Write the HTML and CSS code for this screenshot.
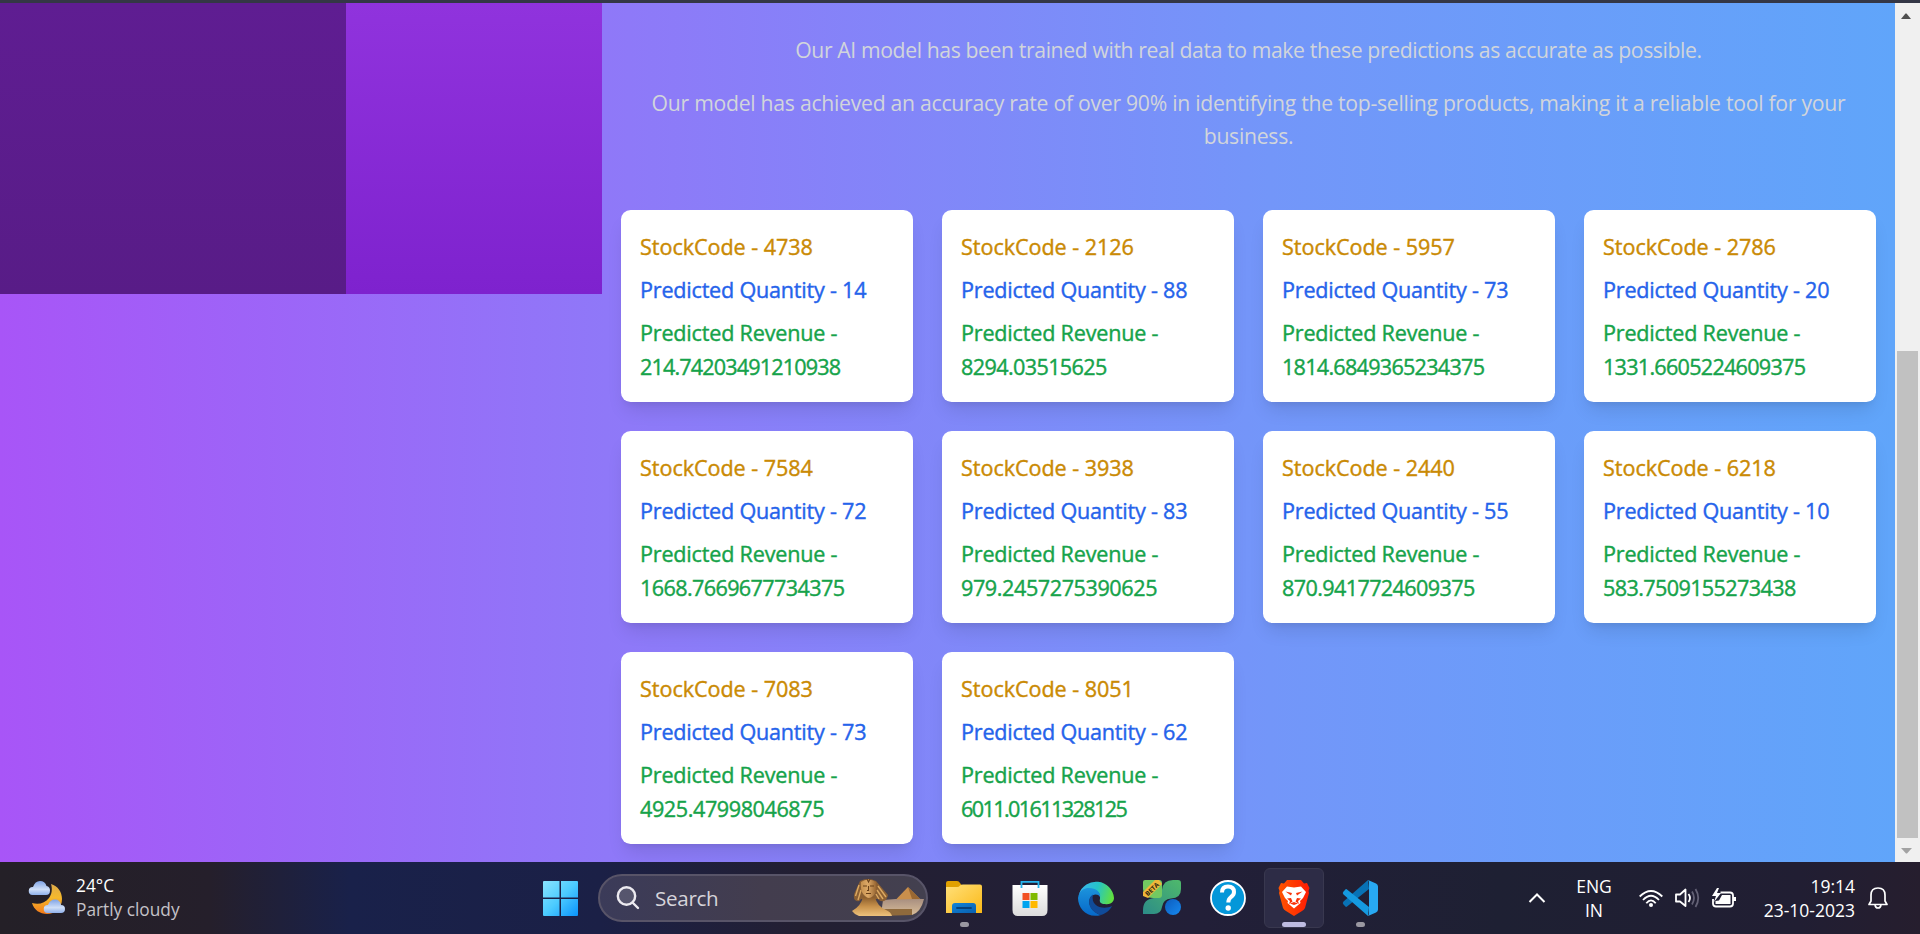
FILE: index.html
```html
<!DOCTYPE html>
<html lang="en">
<head>
<meta charset="utf-8">
<title>Product Predictions</title>
<link rel="stylesheet" href="styles.css">
</head>
<body>
<div class="frame"></div>
<div class="viewport">
  <div class="page">
    <aside class="sidebar"><div class="side-main"></div><div class="side-sub"></div></aside>
    <main class="content">
      <p class="lead">Our AI model has been trained with real data to make these predictions as accurate as possible.</p>
      <p class="lead lead-long">Our model has achieved an accuracy rate of over 90% in identifying the top-selling products, making it a reliable tool for your<br>business.</p>
      <section class="grid">
        <article class="card"><p class="code">StockCode - 4738</p><p class="qty">Predicted Quantity - 14</p><p class="rev">Predicted Revenue -<br><span class="num tight">214.74203491210938</span></p></article>
        <article class="card"><p class="code">StockCode - 2126</p><p class="qty">Predicted Quantity - 88</p><p class="rev">Predicted Revenue -<br><span class="num">8294.03515625</span></p></article>
        <article class="card"><p class="code">StockCode - 5957</p><p class="qty">Predicted Quantity - 73</p><p class="rev">Predicted Revenue -<br><span class="num snug">1814.6849365234375</span></p></article>
        <article class="card"><p class="code">StockCode - 2786</p><p class="qty">Predicted Quantity - 20</p><p class="rev">Predicted Revenue -<br><span class="num snug">1331.6605224609375</span></p></article>
        <article class="card"><p class="code">StockCode - 7584</p><p class="qty">Predicted Quantity - 72</p><p class="rev">Predicted Revenue -<br><span class="num">1668.7669677734375</span></p></article>
        <article class="card"><p class="code">StockCode - 3938</p><p class="qty">Predicted Quantity - 83</p><p class="rev">Predicted Revenue -<br><span class="num loose">979.2457275390625</span></p></article>
        <article class="card"><p class="code">StockCode - 2440</p><p class="qty">Predicted Quantity - 55</p><p class="rev">Predicted Revenue -<br><span class="num">870.9417724609375</span></p></article>
        <article class="card"><p class="code">StockCode - 6218</p><p class="qty">Predicted Quantity - 10</p><p class="rev">Predicted Revenue -<br><span class="num">583.7509155273438</span></p></article>
        <article class="card"><p class="code">StockCode - 7083</p><p class="qty">Predicted Quantity - 73</p><p class="rev">Predicted Revenue -<br><span class="num loose">4925.47998046875</span></p></article>
        <article class="card"><p class="code">StockCode - 8051</p><p class="qty">Predicted Quantity - 62</p><p class="rev">Predicted Revenue -<br><span class="num tightest">6011.01611328125</span></p></article>
      </section>
    </main>
  </div>
  <div class="scrollbar">
    <svg width="25" height="25"><path d="M6 16l4.500-5.500h1L16 16z" fill="#505050"/></svg>
    <div class="track"><div class="thumb"></div></div>
    <svg width="25" height="23"><path d="M6 9h11l-5 5.500h-1z" fill="#a3a3a3"/></svg>
  </div>
</div>
<footer class="taskbar">
  <div class="weather">
    <svg width="38" height="36" viewBox="0 0 38 36">
      <defs>
        <linearGradient id="moon" x1="0" y1="0" x2="0" y2="1"><stop offset="0" stop-color="#dda94a"/><stop offset=".45" stop-color="#f5b92c"/><stop offset="1" stop-color="#f2791b"/></linearGradient>
        <linearGradient id="cloud" x1="0" y1="0" x2="0" y2="1"><stop offset="0" stop-color="#7fa3e6"/><stop offset=".6" stop-color="#cfdff8"/><stop offset="1" stop-color="#8fb0ea"/></linearGradient>
      </defs>
      <path d="M23 4C30 6 34 12 34 19C34 28 27 34 19 34C12 34 6 30 4 23C11 25 17 23 21 18C24 14 24.500 9 23 4Z" fill="url(#moon)"/>
      <path d="M4.500 15A4 4 0 0 1 5 7Q7 1 12 1Q17 1 18.500 6Q22 6.500 22 10.500Q22 15 18 15Z" fill="url(#cloud)"/>
      <path d="M19.500 33A4 4 0 0 1 20 25Q22 19.500 27 19.500Q32 19.500 33 25Q37 25 37 29Q37 33 33 33Z" fill="url(#cloud)"/>
    </svg>
    <div class="weather-text"><span>24°C</span><span class="dim">Partly cloudy</span></div>
  </div>
  <div class="apps">
    <svg class="start" width="35" height="35" viewBox="0 0 35 35">
      <defs><linearGradient id="win" gradientUnits="userSpaceOnUse" x1="0" y1="0" x2="35" y2="35"><stop offset="0" stop-color="#8ae4ff"/><stop offset=".5" stop-color="#4ccbff"/><stop offset="1" stop-color="#0a93fb"/></linearGradient></defs>
      <path fill="url(#win)" d="M1 0H16.500V16.500H0V1Q0 0 1 0ZM18 0H34Q35 0 35 1V16.500H18ZM0 18H16.500V35H1Q0 35 0 34ZM18 18H35V34Q35 35 34 35H18Z"/>
    </svg>
    <div class="search">
      <svg width="24" height="24" viewBox="0 0 24 24" fill="#ffffff22" stroke="#eceaf0" stroke-width="2.400" stroke-linecap="round"><circle cx="10.500" cy="10" r="8.700"/><path d="M17 17l5 5"/></svg>
      <span class="search-label">Search</span>
      <svg width="74" height="40" viewBox="0 0 74 40">
        <defs>
          <linearGradient id="face" x1="0" y1="0" x2="1" y2="0"><stop offset="0" stop-color="#c48f4e"/><stop offset=".45" stop-color="#dda967"/><stop offset="1" stop-color="#94622f"/></linearGradient>
          <linearGradient id="body" x1="0" y1="0" x2="0" y2="1"><stop offset="0" stop-color="#8a5c2b"/><stop offset=".5" stop-color="#c8924c"/><stop offset="1" stop-color="#edc27c"/></linearGradient>
          <linearGradient id="dune" x1="0" y1="0" x2="0" y2="1"><stop offset="0" stop-color="#a78e80"/><stop offset="1" stop-color="#d9bd98"/></linearGradient>
        </defs>
        <path d="M32 22Q50 20 73 21Q70 34 61 37H30Z" fill="url(#dune)"/>
        <path d="M45 21.500L57 9L69 21Z" fill="#c98f4c"/><path d="M57 9L69 21H61Z" fill="#9a6832"/>
        <path d="M30 31H61V37L30 38Z" fill="#8f6a3c"/>
        <path d="M9 3Q17-1 25 3L37 17Q36 22 33 23Q29 24 27 21H10Q8 25 4 22Q2 20 3.500 15Z" fill="#8a5f33"/>
        <path d="M8 7L4.500 18M10 12L7 22M27 8L35 19M26 12L32 21M25 16L28 21" stroke="#dca961" stroke-width="1.400" fill="none"/>
        <path d="M1 33Q10 28 12 19H24Q26 28 35 32Q40 34 41 38H8Q3 36 1 33Z" fill="url(#body)"/>
        <path d="M10 4Q17-1 25 4Q27 14 22 18Q18 22 14 18Q9 14 10 4Z" fill="url(#face)"/>
        <path d="M12 8H16M19 8H23M17.500 8V12.500H16M15 15.500H20M16 1L17.500 4L19 1" stroke="#694018" stroke-width="1.100" fill="none"/>
      </svg>
    </div>
    <div class="app"><svg width="36" height="36" viewBox="0 0 36 36">
      <defs><linearGradient id="fold" x1="0" y1="0" x2="1" y2="1"><stop offset="0" stop-color="#ffe07a"/><stop offset="1" stop-color="#fbb917"/></linearGradient><linearGradient id="fb" x1="0" y1="0" x2="1" y2="1"><stop offset="0" stop-color="#1284d8"/><stop offset="1" stop-color="#0960b0"/></linearGradient></defs>
      <path d="M0 3Q0 1 2 1H11Q13 1 14 3L15.500 5V9H0Z" fill="#e0a000"/><path d="M0 7H11Q13 7 14 5.500Q15 4.500 17 4.500H34Q36 4.500 36 6.500V33H0Z" fill="url(#fold)"/>
      <path d="M6 33V26Q6 23 9 23H27Q30 23 30 26V33Z" fill="url(#fb)"/><path d="M11 28H25" stroke="#07427c" stroke-width="1.800" stroke-linecap="round"/>
    </svg><i class="dot"></i></div>
    <div class="app"><svg width="36" height="36" viewBox="0 0 36 36">
      <defs><linearGradient id="bag" x1="0" y1="0" x2="0" y2="1"><stop offset="0" stop-color="#fff"/><stop offset="1" stop-color="#dcdcdc"/></linearGradient></defs>
      <path d="M.500 5H35.500V30Q35.500 36 30 36H6Q.500 36 .500 30Z" fill="url(#bag)"/><path d="M9.500 8V1.800H26.500V8" fill="none" stroke="#25b4ec" stroke-width="1.800"/>
      <path d="M10.500 13h7v7h-7z" fill="#f25022"/><path d="M18.500 13h7v7h-7z" fill="#7fba00"/><path d="M10.500 21h7v7h-7z" fill="#00a4ef"/><path d="M18.500 21h7v7h-7z" fill="#ffb900"/>
    </svg></div>
    <div class="app"><svg width="36" height="36" viewBox="0 0 36 36">
      <defs><linearGradient id="e1" x1="0" y1=".3" x2="1" y2=".5"><stop offset="0" stop-color="#3bb5f0"/><stop offset=".5" stop-color="#25c4c8"/><stop offset="1" stop-color="#61e03e"/></linearGradient><linearGradient id="e2" x1="0" y1="0" x2="0" y2="1"><stop offset="0" stop-color="#1c93dc"/><stop offset="1" stop-color="#0668c8"/></linearGradient></defs>
      <path d="M1 14A18 18 0 0 1 36 18C36 22 32 25 27 24C23 24 21 22 22 19C23 11 15 5 1 14Z" fill="url(#e1)"/>
      <path d="M0 18C1 10 7 8 11 8C19 8 23 13 22 17C20 13 14 14 12 18C9 25 15 33 23 35C9 39 0 28 0 18Z" fill="url(#e2)"/>
      <path d="M15 14.500C9 18 9 31 23 35C29 33 32 30 34 26C26 30 12 27 15 14.500Z" fill="#104b99"/>
    </svg></div>
    <div class="app"><svg width="38" height="36" viewBox="0 0 38 36">
      <defs><linearGradient id="g1" x1="0" y1="1" x2="1" y2="0"><stop offset="0" stop-color="#2c8c88"/><stop offset="1" stop-color="#4fb96b"/></linearGradient><linearGradient id="bl" x1="0" y1="0" x2="1" y2="1"><stop offset="0" stop-color="#0d5cbd"/><stop offset="1" stop-color="#1689f0"/></linearGradient></defs>
      <path d="M0 34V30Q0 19 11 18Q19 17 19 10Q20 0 30 0H35Q38 0 38 3V9Q38 18 28 18.500Q20 19 19 27Q18 34 11 34Z" fill="url(#g1)"/>
      <path d="M0 2Q0 0 2 0H16Q19 0 19 3V15Q19 18 16 18H10Q0 18 0 9Z" fill="#72c961"/>
      <circle cx="30" cy="27" r="8" fill="url(#bl)"/>
      <path d="M0 12L12 0H16L19 4L5 18L0 16Z" fill="#edb63a"/><text x="9" y="11.500" class="beta" transform="rotate(-43 9 9)">BETA</text>
    </svg></div>
    <div class="app"><svg width="36" height="36" viewBox="0 0 36 36">
      <circle cx="18" cy="18" r="17" fill="#0497d9" stroke="#fff" stroke-width="1.800"/><path d="M12 12.500Q12 6.500 18 6.500Q24 6.500 24 12Q24 15 21 17Q18.300 19 18.300 22.500" fill="none" stroke="#fff" stroke-width="4"/><circle cx="18.200" cy="28" r="2.700" fill="#fff"/>
    </svg></div>
    <div class="app active"><svg width="32" height="36" viewBox="0 0 32 36">
      <defs><linearGradient id="br" x1="0" y1="0" x2="1" y2="0"><stop offset="0" stop-color="#ff5500"/><stop offset="1" stop-color="#ff1b04"/></linearGradient></defs>
      <path d="M9 0H23L26 3.500L29 3L31.500 8L30.500 11L31 13L27 28Q26 30 24 31L16 36L8 31Q6 30 5 28L1 13L1.500 11L.500 8L3 3L6 3.500Z" fill="url(#br)"/>
      <path d="M9 6.500L16 7.500L23 6.500L28 12L25 18L22 21L22.500 23L16 28.500L9.500 23L10 21L7 18L4 12Z" fill="#fff"/>
      <path d="M7.500 11.500L14 13L13 15.500ZM24.500 11.500L18 13L19 15.500ZM9 18.500L13 18L14.500 21.500L11 24L12 21ZM23 18.500L19 18L17.500 21.500L21 24L20 21ZM12 23.500L16 22L20 23.500L16 25Z" fill="#f93208"/>
    </svg><i class="dot wide"></i></div>
    <div class="app"><svg width="36" height="36" viewBox="0 0 36 36">
      <path d="M1.500 24.500Q0 23 1.500 21.500L26 0L27 9L5 26.500Q4 27.500 3 26Z" fill="#0872b5"/>
      <path d="M1.500 11.500Q0 13 1.500 14.500L26 36L27 27L5 9.500Q4 8.500 3 10Z" fill="#159ae0"/>
      <path d="M26 0L34 3.500Q36 4.500 36 6.500V29.500Q36 31.500 34 32.500L26 36Q27 35 27 33V3Q27 1 26 0Z" fill="#28a9f2"/>
    </svg><i class="dot"></i></div>
  </div>
  <div class="tray">
    <svg width="18" height="12" viewBox="0 0 18 12"><path d="M1.500 10L9 2.500L16.500 10" fill="none" stroke="#fff" stroke-width="2"/></svg>
    <div class="lang"><span>ENG</span><span>IN</span></div>
    <svg class="wifi" width="24" height="19" viewBox="0 0 24 19" fill="none" stroke="#fff" stroke-width="1.800"><path d="M.700 7.500Q12-3.500 23.300 7.500M4 11Q12 2.500 20 11M7.300 14.200Q12 8.500 16.700 14.200"/><circle cx="12" cy="16" r="2" fill="#fff" stroke="none"/></svg>
    <svg class="vol" width="25" height="20" viewBox="0 0 25 20" fill="none" stroke="#fff" stroke-width="1.800" stroke-linejoin="round"><path d="M1 6.500H5L10.500 1.500V18L5 13.500H1Z"/><path d="M13.500 6Q16.500 10 13.500 14"/><path d="M17 3.500Q21 10 17 16.500M20.500 1Q26 10 20.500 19" stroke="#636175"/></svg>
    <svg class="bat" width="25" height="20" viewBox="0 0 25 20"><path d="M8.500 4.500H18Q21 4.500 21 7.500V15.500Q21 18.500 18 18.500H4Q1 18.500 1 15.500V11" fill="none" stroke="#fff" stroke-width="1.800"/><path d="M10 7H18.500V16H3.500V13L7 12.500Z" fill="#fff"/><path d="M5 0L0 8H4L2 14L9 5H5L7 0Z" fill="#fff"/><path d="M21 9h3v4H21z" fill="#fff"/></svg>
    <div class="clock"><span>19:14</span><span>23-10-2023</span></div>
    <svg class="bell" width="20" height="24" viewBox="0 0 20 24" fill="none" stroke="#fff" stroke-width="1.700" stroke-linejoin="round"><path d="M1 18.500L3 15V9Q3 2 10 2Q17 2 17 9V15L19 18.500Z"/><path d="M7 19Q7.500 22 10 22Q12.500 22 13 19"/></svg>
  </div>
</footer>
</body>
</html>
```

FILE: styles.css
```css
* { box-sizing: border-box; }
body { margin: 0; width: 1920px; height: 934px; overflow: hidden; display: flex; flex-direction: column; font-family: "Open Sans", "Noto Sans", sans-serif; }
p { margin: 0; }
svg { display: block; flex: none; }
.frame { height: 3px; background: #343746; flex: none; }
.viewport { height: 859px; display: flex; flex: none; }
.page { width: 1895px; display: flex; align-items: flex-start; background: linear-gradient(to right, #a855f7, #8f78f8 32%, #7396f9 67%, #60a5fa); }
.sidebar { width: 602px; height: 291px; display: flex; flex: none; }
.side-main { width: 346px; background: linear-gradient(#5f1d92, #581c87); }
.side-sub { flex: 1; background: linear-gradient(#9033dd, #7e22ce); }
.content { flex: 1; padding: 30px 19px 0; }
.lead { font-size: 21.2px; line-height: 33.6px; letter-spacing: -.39px; color: #d1d5db; text-align: center; white-space: nowrap; margin-bottom: 19.2px; }
.lead-long { letter-spacing: -.27px; }
.grid { display: grid; grid-template-columns: repeat(4, 292px); gap: 29px; margin-top: 57px; }
.card { height: 192px; padding: 20px 19px 18px; background: #fff; border-radius: 9.6px; box-shadow: 0 12px 18px -4px rgba(0,0,0,.1), 0 5px 7px -5px rgba(0,0,0,.1); font-size: 21.6px; line-height: 33.6px; white-space: nowrap; -webkit-text-stroke: .4px currentColor; }
.card p + p { margin-top: 9.6px; }
.code { color: #ca8a04; letter-spacing: -.05px; }
.qty { color: #2563eb; letter-spacing: -.22px; }
.rev { color: #16a34a; letter-spacing: -.2px; }
.num { letter-spacing: -.62px; }
.snug { letter-spacing: -.74px; }
.tight { letter-spacing: -.85px; }
.tightest { letter-spacing: -1.6px; }
.loose { letter-spacing: -.42px; }
.scrollbar { width: 25px; background: #f0f0f0; display: flex; flex-direction: column; }
.track { flex: 1; padding: 323px 2px 0; }
.thumb { height: 487px; background: #c1c1c1; }
.taskbar { height: 72px; display: flex; align-items: center; color: #fff; background: linear-gradient(to right, #242027 0, #251f2b 210px, #19214a 350px, #1b2046 600px, #231f32 800px, #221f38 1200px, #1e2033 1500px, #211e33 1800px, #261e2e 1920px); }
.weather { width: 540px; padding-left: 28px; display: flex; gap: 10px; align-items: center; }
.weather-text { display: flex; flex-direction: column; font-size: 17.3px; line-height: 24px; }
.dim { color: #c4c2c8; }
.apps { display: flex; align-items: center; }
.start { margin: 0 20px 0 3px; }
.search { width: 330px; height: 48px; border: 2px solid #585468; border-radius: 24px; background: linear-gradient(to right, #3b3b59, #433d4e 50%, #43404f); display: flex; align-items: center; padding: 0 1px 0 16px; margin-right: 6px; }
.search-label { font-size: 20.6px; letter-spacing: -.3px; color: #d6d4da; margin-left: 15px; flex: 1; }
.app { width: 60px; height: 60px; margin-right: 6px; display: flex; align-items: center; justify-content: center; border-radius: 6px; position: relative; }
.active { background: #2d2c46; border: 1px solid #39384f; }
.dot { position: absolute; bottom: 1px; width: 9px; height: 5px; border-radius: 3px; background: #9a98a1; }
.wide { width: 24px; background: #bebce2; bottom: 0; }
.beta { font: bold 6.500px "Open Sans", sans-serif; text-anchor: middle; fill: #2a2410; }
.tray { margin-left: auto; padding-right: 32px; display: flex; align-items: center; }
.lang, .clock { display: flex; flex-direction: column; font-size: 17.5px; line-height: 24px; }
.lang { width: 44px; margin-left: 26px; align-items: center; }
.clock { width: 94px; margin-left: 24px; align-items: flex-end; }
.wifi { margin-left: 23px; }
.vol, .bat { margin-left: 12px; }
.bell { margin-left: 13px; }
```
